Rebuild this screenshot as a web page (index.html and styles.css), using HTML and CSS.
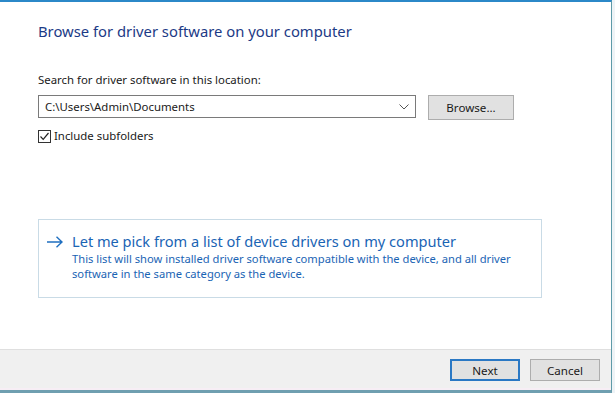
FILE: index.html
```html
<!DOCTYPE html>
<html lang="en">
<head>
  <meta charset="UTF-8" />
  <title>Update Drivers</title>
  <link rel="stylesheet" href="styles.css">
</head>
<body>
  <div class="window">
    <div class="content">
      <h1 class="title">Browse for driver software on your computer</h1>

      <label class="field-label" for="path">Search for driver software in this location:</label>
      <div class="path-row">
        <div class="combo">
          <span class="combo-text" id="path">C:\Users\Admin\Documents</span>
          <svg class="combo-arrow" width="10" height="6" viewBox="0 0 10 6">
            <path d="M0.5 0.5 L5 5 L9.5 0.5" fill="none" stroke="#555" stroke-width="1" />
          </svg>
        </div>
        <button class="btn browse-btn">Browse...</button>
      </div>

      <div class="check-row">
        <span class="checkbox">
          <svg width="11" height="11" viewBox="0 0 11 11">
            <path d="M1.5 5.5 L4.2 8.3 L9.5 2" fill="none" stroke="#222" stroke-width="1.2" />
          </svg>
        </span>
        <span>Include subfolders</span>
      </div>

      <div class="link-box">
        <svg class="link-arrow" width="17" height="12" viewBox="0 0 17 12">
          <path d="M1 6 H16 M10.5 0.8 L16 6 L10.5 11.2" fill="none" stroke="#1f6fc0" stroke-width="1.4" />
        </svg>
        <div class="link-body">
          <div class="link-title">Let me pick from a list of device drivers on my computer</div>
          <div class="link-desc">This list will show installed driver software compatible with the device, and all driver software in the same category as the device.</div>
        </div>
      </div>
    </div>

    <div class="footer">
      <button class="btn next-btn">Next</button>
      <button class="btn">Cancel</button>
    </div>
  </div>
</body>
</html>
```

FILE: styles.css
```css
body {
  margin: 0;
  background-color: #eef3f6;
  font-family: "Noto Sans", "Open Sans", sans-serif;
  font-size: 11.4px;
  color: #1a1a1a;
}

.window {
  width: 611px;
  height: 388px;
  background-color: #fff;
  border-top: 2px solid #2b88c8;
  border-right: 1px solid #5e9aa8;
  border-bottom: 3px solid #6f9fb0;
  display: flex;
  flex-direction: column;
}

.content {
  flex-grow: 1;
  padding: 19px 0 0 38px;
  display: flex;
  flex-direction: column;
}

.title {
  margin: 0;
  font-size: 14.8px;
  font-weight: normal;
  line-height: 20px;
  color: #1c3a86;
}

.field-label {
  margin-top: 31px;
  line-height: 16px;
}

/* Combo + browse */
.path-row {
  display: flex;
  align-items: flex-start;
  gap: 12px;
  margin-top: 7px;
}

.combo {
  width: 364px;
  height: 21px;
  border: 1px solid #7a7a7a;
  display: flex;
  align-items: center;
  justify-content: space-between;
  padding: 0 6px;
}

.combo-text {
  line-height: 16px;
}

.btn {
  font-family: inherit;
  font-size: 11.6px;
  color: #1a1a1a;
  background-color: #e1e1e1;
  border: 1px solid #adadad;
  padding: 0;
  height: 24px;
  width: 86px;
  cursor: pointer;
}

.browse-btn {
  height: 25px;
}

.check-row {
  display: flex;
  align-items: center;
  gap: 3px;
  margin-top: 8px;
  line-height: 16px;
}

.checkbox {
  width: 11px;
  height: 11px;
  border: 1px solid #333;
  display: flex;
  align-items: center;
  justify-content: center;
}

/* Command link */
.link-box {
  width: 504px;
  height: 79px;
  margin-top: 75px;
  border: 1px solid #c9dbe6;
  display: flex;
  align-items: flex-start;
  gap: 9px;
  padding-left: 7px;
  box-sizing: border-box;
}

.link-arrow {
  margin-top: 16px;
}

.link-body {
  margin-top: 11px;
}

.link-title {
  font-size: 14.6px;
  line-height: 20px;
  color: #1a64b4;
}

.link-desc {
  font-size: 11.2px;
  line-height: 15px;
  color: #1a64b4;
  width: 450px;
}

/* Footer */
.footer {
  height: 31px;
  padding: 9px 11px 0 0;
  background-color: #f0f0f0;
  border-top: 1px solid #dfdfdf;
  box-shadow: inset 0 -2px 0 #f7eef5;
  display: flex;
  align-items: flex-start;
  justify-content: flex-end;
  gap: 10px;
}

.footer .btn {
  width: 70px;
  height: 22px;
}

.footer .next-btn {
  border: 2px solid #2a78c4;
}
```
